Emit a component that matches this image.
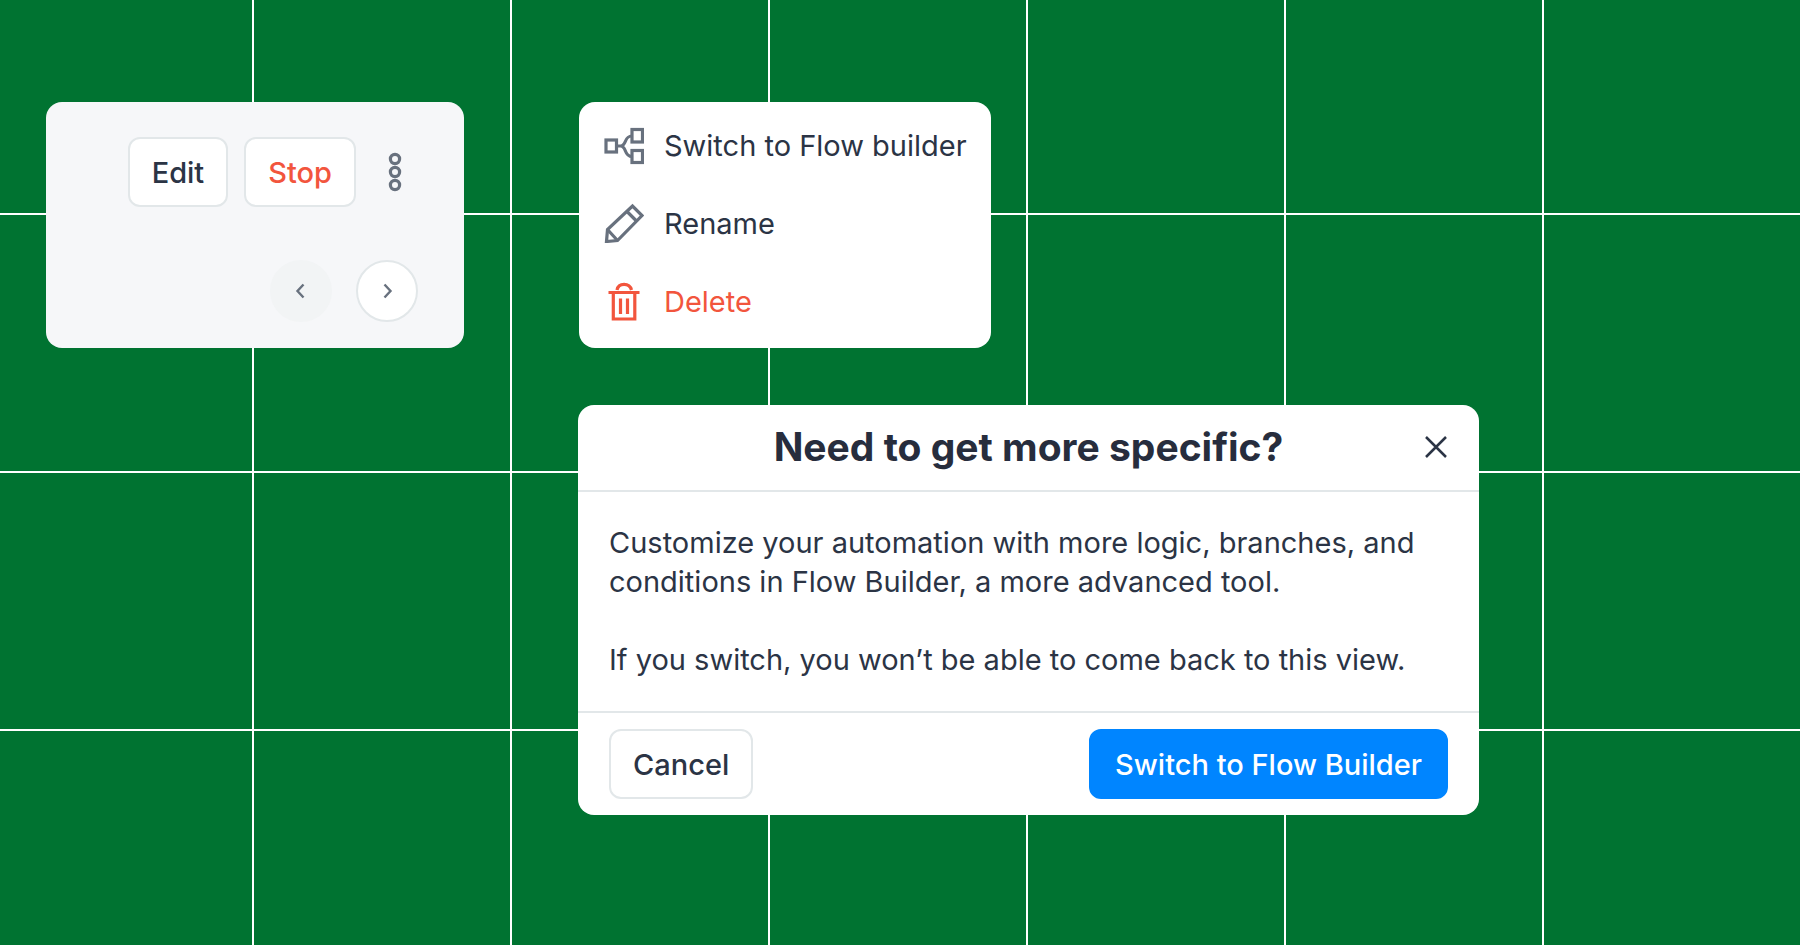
<main class="canvas">
  <section class="card toolbar" aria-label="Automation controls">
    <div class="row">
      <button class="btn" type="button">Edit</button>
      <button class="btn danger" type="button">Stop</button>
      <button class="more" type="button" aria-label="More actions">
        <svg viewBox="0 0 16 42" width="16" height="42" fill="none" stroke="currentColor" stroke-width="3.2">
          <circle cx="8" cy="8" r="4.6" />
          <circle cx="8" cy="21" r="4.6" />
          <circle cx="8" cy="34" r="4.6" />
        </svg>
      </button>
    </div>
    <div class="row pager">
      <button class="round off" type="button" aria-label="Previous">
        <svg viewBox="0 0 16 18" width="16" height="18" fill="none" stroke="currentColor" stroke-width="2.4">
          <path d="M10.5 2.5 4.5 9l6 6.5" />
        </svg>
      </button>
      <button class="round" type="button" aria-label="Next">
        <svg viewBox="0 0 16 18" width="16" height="18" fill="none" stroke="currentColor" stroke-width="2.4">
          <path d="M5.5 2.5l6 6.5-6 6.5" />
        </svg>
      </button>
    </div>
  </section>

  <ul class="card menu">
    <li>
      <button class="item" type="button">
        <svg viewBox="0 0 40 40" width="40" height="40" fill="none" stroke="currentColor" stroke-width="3.2">
          <rect x="2" y="15" width="10.5" height="12" />
          <rect x="28" y="4.500" width="10.500" height="12.500" />
          <rect x="28" y="25.500" width="10.500" height="12" />
          <path d="M12.500 21h4C23 21 19.500 11 28 11M16.500 21C23 21 19.500 31.500 28 31.500" />
        </svg>
        Switch to Flow builder
      </button>
    </li>
    <li>
      <button class="item" type="button">
        <svg viewBox="0 0 40 40" width="40" height="40" fill="none" stroke="currentColor" stroke-width="3.2">
          <path d="M2.500 38.500 3.500 26.500 28.500 3 38 12.500 13.500 37.500z" />
          <path d="M3.500 26.500 13.500 37.500M23 8.500l9.500 9.500" />
        </svg>
        Rename
      </button>
    </li>
    <li>
      <button class="item danger" type="button">
        <svg viewBox="0 0 40 40" width="40" height="40" fill="none" stroke="currentColor" stroke-width="3.2">
          <path d="M4.500 11.500h31M9.300 11.500v26.500h21.500V11.500M16.500 17.500v15.500M23.500 17.500v15.500M13 9c1.500-7.500 12.500-7.500 14.500 0" />
        </svg>
        Delete
      </button>
    </li>
  </ul>

  <div class="card dialog" role="dialog" aria-labelledby="dialog-title">
    <header>
      <h2 id="dialog-title">Need to get more specific?</h2>
      <button class="close" type="button" aria-label="Close">
        <svg viewBox="0 0 24 24" width="24" height="24" fill="none" stroke="currentColor" stroke-width="2.5">
          <path d="M2 2l20 20M22 2 2 22" />
        </svg>
      </button>
    </header>
    <div class="body">
      <p>Customize your automation with more logic, branches, and conditions in Flow Builder, a more advanced tool.</p>
      <p>If you switch, you won’t be able to come back to this view.</p>
    </div>
    <footer>
      <button class="btn" type="button">Cancel</button>
      <button class="btn primary" type="button">Switch to Flow Builder</button>
    </footer>
  </div>
</main>

<style>
  :global(body) {
    margin: 0;
    background: #007331;
  }
  .canvas {
    --ink: #2b3445;
    --red: #f2553d;
    --grey: #68717e;
    --edge: #e2e7e9;
    box-sizing: border-box;
    min-height: 100vh;
    padding: 102px 321px 102px 46px;
    display: grid;
    grid-template-columns: 418fr 901fr;
    grid-template-rows: auto auto;
    align-content: start;
    gap: 57px 114px;
    font: 400 29px/39px Inter, sans-serif;
    color: var(--ink);
    background-color: #007331;
    background-image:
      linear-gradient(90deg, #fff 2px, transparent 2px),
      linear-gradient(#fff 2px, transparent 2px);
    background-size: 258px 258px;
    background-position: 252px 213px;
  }
  button {
    box-sizing: border-box;
    margin: 0;
    padding: 0;
    border: 0;
    background: none;
    font: inherit;
    color: inherit;
    cursor: pointer;
  }
  svg {
    display: block;
    flex: none;
  }
  .card {
    box-sizing: border-box;
    background: #fff;
    border-radius: 16px;
  }
  .toolbar {
    background: #f6f7f9;
    padding: 35px 46px 26px;
    display: flex;
    flex-direction: column;
    justify-content: space-between;
  }
  .row {
    display: flex;
    justify-content: flex-end;
    gap: 16px;
  }
  .pager {
    gap: 24px;
  }
  .btn {
    height: 70px;
    padding: 0 22px;
    border: 2px solid var(--edge);
    border-radius: 12px;
    background: #fff;
    font-weight: 500;
  }
  .danger {
    color: var(--red);
  }
  .primary {
    padding: 0 24px;
    border-color: #0085ff;
    background: #0085ff;
    color: #fff;
  }
  .more {
    width: 46px;
    display: grid;
    place-items: center;
    color: var(--grey);
  }
  .round {
    width: 62px;
    height: 62px;
    border: 2px solid var(--edge);
    border-radius: 50%;
    background: #fff;
    display: grid;
    place-items: center;
    color: var(--grey);
  }
  .off {
    border-color: #f2f4f5;
    background: #f2f4f5;
  }
  .menu {
    justify-self: start;
    margin: 0 0 0 1px;
    padding: 4px 24px 8px 25px;
    list-style: none;
  }
  .item {
    height: 78px;
    display: flex;
    align-items: center;
    gap: 20px;
  }
  .item svg {
    color: var(--grey);
  }
  .item.danger svg {
    color: inherit;
  }
  .dialog {
    grid-column: 2;
  }
  header {
    display: grid;
    grid-template-columns: 1fr auto 1fr;
    align-items: center;
    min-height: 83px;
    padding: 0 31px 2px;
    border-bottom: 2px solid var(--edge);
  }
  h2 {
    grid-column: 2;
    margin: 0;
    font-size: 39px;
    line-height: 48px;
    font-weight: 700;
    color: #272d3d;
  }
  .close {
    justify-self: end;
  }
  .body {
    padding: 31px 31px 32px;
  }
  p {
    margin: 0;
  }
  p + p {
    margin-top: 39px;
  }
  footer {
    display: flex;
    justify-content: space-between;
    padding: 16px 31px;
    border-top: 2px solid var(--edge);
  }
</style>
